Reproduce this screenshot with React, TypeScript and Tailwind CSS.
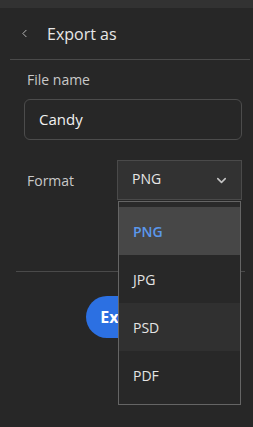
import { ChevronLeft, ChevronDown } from 'lucide-react';

const font = { fontFamily: '"Open Sans", "Noto Sans", sans-serif' };

export default function App() {
  const options = [
    { label: 'PNG', bg: 'bg-[#474747]', text: 'text-[#5b98ec] font-semibold' },
    { label: 'JPG', bg: 'bg-[#282828]', text: 'text-[#e4e4e4]' },
    { label: 'PSD', bg: 'bg-[#303030]', text: 'text-[#e4e4e4]' },
    { label: 'PDF', bg: 'bg-[#282828]', text: 'text-[#e4e4e4]' },
  ];

  return (
    <div className="relative w-[253px] h-[427px] overflow-hidden bg-[#272727]" style={font}>
      <div className="h-[8px] bg-[#323232]" />

      {/* header */}
      <div className="flex items-center h-[51px] pl-[18px]">
        <ChevronLeft size={13} strokeWidth={1.75} className="text-[#bdbdbd]" />
        <span className="ml-[16px] text-[16px] text-[#e8e8e8]">Export as</span>
      </div>
      <div className="ml-[10px] mr-[3px] border-t border-[#4a4a4a]" />

      {/* form */}
      <div className="pl-[24px] pr-[11px]">
        <div className="pt-[10px] pl-[3px] text-[14px] leading-[20px] text-[#c9c9c9]">File name</div>
        <div className="mt-[9px] h-[41px] rounded-[6px] border border-[#4c4c4c] flex items-center pl-[14px]">
          <span className="text-[15px] font-medium text-[#f2f2f2]">Candy</span>
        </div>

        <div className="mt-[20px] flex items-center">
          <span className="w-[93px] pl-[3px] text-[14px] text-[#c9c9c9]">Format</span>
          <div className="flex-1 h-[40px] bg-[#323232] border border-[#4a4a4a] flex items-center justify-between pl-[14px] pr-[12px]">
            <span className="text-[14px] text-[#e6e6e6] -mt-[3px]">PNG</span>
            <ChevronDown size={15} strokeWidth={2.5} className="text-[#c4c4c4]" />
          </div>
        </div>
      </div>

      <div className="mt-[71px] ml-[16px] mr-[8px] border-t border-[#4a4a4a]" />

      <div className="mt-[24px] flex justify-center">
        <button className="w-[82px] h-[42px] rounded-full bg-[#2c70e2] text-white text-[16px] font-bold">
          Export
        </button>
      </div>

      {/* dropdown menu */}
      <div className="absolute left-[118px] top-[201px] w-[123px] h-[204px] border border-[#656565] bg-[#282828] flex flex-col">
        <div className="h-[5px] bg-[#2a2a2a]" />
        {options.map(o => (
          <div key={o.label} className={`h-[48px] flex items-center pl-[14px] ${o.bg}`}>
            <span className={`text-[14px] ${o.text}`}>{o.label}</span>
          </div>
        ))}
      </div>
    </div>
  );
}
